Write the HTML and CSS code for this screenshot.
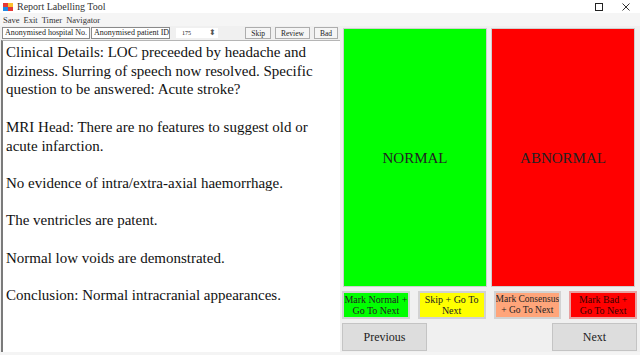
FILE: index.html
```
<!DOCTYPE html>
<html lang="en">
<head>
    <meta charset="UTF-8">
    <title>Report Labelling Tool</title>
    <link rel="stylesheet" href="styles.css">
</head>
<body>
    <div class="window">
        <div class="titlebar">
            <svg class="app-icon" width="10" height="10" viewBox="0 0 10 10">
                <rect x="0" y="1" width="5" height="4" fill="#e53935"/>
                <rect x="5" y="1" width="5" height="4" fill="#fbc02d"/>
                <rect x="0" y="5" width="5" height="4" fill="#1e88e5"/>
                <rect x="5" y="5" width="5" height="4" fill="#e53935"/>
            </svg>
            <span class="title">Report Labelling Tool</span>
            <div class="win-controls">
                <span class="ctl ctl-max"></span>
                <svg class="ctl-close" width="8" height="8" viewBox="0 0 8 8">
                    <path d="M0.5 0.5 L7.5 7.5 M7.5 0.5 L0.5 7.5" stroke="#333" stroke-width="1" fill="none"/>
                </svg>
            </div>
        </div>
        <div class="menubar">
            <span>Save</span>
            <span>Exit</span>
            <span>Timer</span>
            <span>Navigator</span>
        </div>
        <div class="main">
            <div class="left">
                <div class="toolbar">
                    <div class="field f-hosp">Anonymised hospital No.</div>
                    <div class="field f-pat">Anonymised patient ID</div>
                    <div class="spin">
                        <span>175</span>
                        <span class="arrows">⬍</span>
                    </div>
                    <div class="tool-buttons">
                        <button class="tbtn">Skip</button>
                        <button class="tbtn">Review</button>
                        <button class="tbtn">Bad</button>
                    </div>
                </div>
                <div class="report">
                    <p>Clinical Details: LOC preceeded by headache and diziness. Slurring of speech now resolved. Specific question to be answered: Acute stroke?</p>
                    <p>MRI Head: There are no features to suggest old or acute infarction.</p>
                    <p>No evidence of intra/extra-axial haemorrhage.</p>
                    <p>The ventricles are patent.</p>
                    <p>Normal low voids are demonstrated.</p>
                    <p>Conclusion: Normal intracranial appearances.</p>
                </div>
            </div>
            <div class="right">
                <div class="big-boxes">
                    <div class="big normal">NORMAL</div>
                    <div class="big abnormal">ABNORMAL</div>
                </div>
                <div class="actions">
                    <button class="act act-normal">Mark Normal +<br>Go To Next</button>
                    <button class="act act-skip">Skip + Go To<br>Next</button>
                    <button class="act act-consensus">Mark Consensus<br>+ Go To Next</button>
                    <button class="act act-bad">Mark Bad +<br>Go To Next</button>
                </div>
                <div class="nav">
                    <button class="navbtn">Previous</button>
                    <button class="navbtn">Next</button>
                </div>
            </div>
        </div>
        <div class="bottom-edge"></div>
    </div>
</body>
</html>
```

FILE: styles.css
```
body {
    margin: 0;
    font-family: 'Liberation Serif', 'Times New Roman', serif;
    background-color: #ffffff;
    color: #111;
}
.window {
    width: 640px;
    height: 355px;
    overflow: hidden;
    display: flex;
    flex-direction: column;
    background-color: #f0f0f0;
}
.titlebar {
    height: 13px;
    background-color: #ffffff;
    display: flex;
    align-items: center;
    padding-left: 3px;
    font-size: 10px;
    color: #333;
}
.app-icon {
    margin-right: 4px;
}
.title {
    flex: 1;
}
.win-controls {
    display: flex;
    align-items: center;
    gap: 19px;
    padding-right: 10px;
    padding-top: 1px;
}
.ctl-max {
    display: inline-block;
    width: 6px;
    height: 6px;
    border: 1px solid #222;
}
.menubar {
    height: 13px;
    display: flex;
    align-items: center;
    gap: 4px;
    padding-left: 3px;
    font-size: 8.5px;
    color: #333;
    background-color: #f5f5f5;
}
.main {
    flex: 1;
    display: flex;
    min-height: 0;
}
.left {
    width: 340px;
    display: flex;
    flex-direction: column;
}
.toolbar {
    height: 14px;
    display: flex;
    align-items: center;
    padding-left: 2px;
    font-size: 8px;
}
.field {
    height: 10px;
    line-height: 10px;
    background-color: #fff;
    border: 1px solid #8a8a8a;
    padding: 0 2px;
    color: #222;
    margin-right: 1px;
    white-space: nowrap;
    overflow: hidden;
}
.f-hosp {
    width: 82px;
}
.f-pat {
    width: 73px;
}
.spin {
    width: 36px;
    height: 10px;
    line-height: 10px;
    background-color: #fff;
    margin-left: 5px;
    padding-left: 6px;
    display: flex;
    justify-content: space-between;
    font-size: 6px;
}
.arrows {
    font-size: 8px;
    color: #555;
    padding-right: 2px;
}
.tool-buttons {
    margin-left: auto;
    display: flex;
    gap: 4px;
    padding-right: 2px;
}
.tbtn {
    height: 12px;
    padding: 0 5px;
    font-family: inherit;
    font-size: 7.5px;
    background-color: #f5f5f5;
    border: 1px solid #adadad;
    color: #222;
}
.report {
    flex: 1;
    background-color: #fff;
    border-top: 1px solid #b5b5b5;
    border-left: 2px solid #7a7a7a;
    margin-left: 1px;
    padding: 2px 3px;
    font-size: 15px;
    line-height: 18.7px;
    color: #111;
}
.report p {
    margin: 0 0 18.7px 0;
}
.right {
    flex: 1;
    display: flex;
    flex-direction: column;
    padding: 2px 3px 0 2px;
}
.big-boxes {
    height: 259px;
    display: grid;
    grid-template-columns: 1fr 1fr;
    gap: 4px;
    padding-left: 1px;
    padding-right: 2px;
}
.big {
    display: flex;
    align-items: center;
    justify-content: center;
    font-size: 15px;
    color: #222;
    border: 1px solid #cfcfcf;
    padding-top: 1px;
}
.normal {
    background-color: #00ff00;
}
.abnormal {
    background-color: #ff0000;
}
.actions {
    margin-top: 4px;
    height: 28px;
    display: grid;
    grid-template-columns: repeat(4, 1fr);
    gap: 8px;
}
.act {
    font-family: inherit;
    font-size: 10px;
    line-height: 11px;
    color: #222;
    border: 2px solid #d2d2d2;
    padding: 0;
    white-space: nowrap;
    overflow: hidden;
}
.act-normal {
    background-color: #00ff00;
}
.act-skip {
    background-color: #ffff00;
}
.act-consensus {
    background-color: #ffa57a;
    font-size: 9.5px;
}
.act-bad {
    background-color: #ff0000;
    border-color: #e8a0a0;
    color: #3a0000;
}
.nav {
    margin-top: 4px;
    height: 28px;
    display: flex;
    justify-content: space-between;
}
.navbtn {
    width: 85px;
    font-family: inherit;
    font-size: 12px;
    color: #222;
    background-color: #dddddd;
    border: 1px solid #c4c4c4;
}
.bottom-edge {
    height: 3px;
    background-color: #f4f4f4;
}
```
